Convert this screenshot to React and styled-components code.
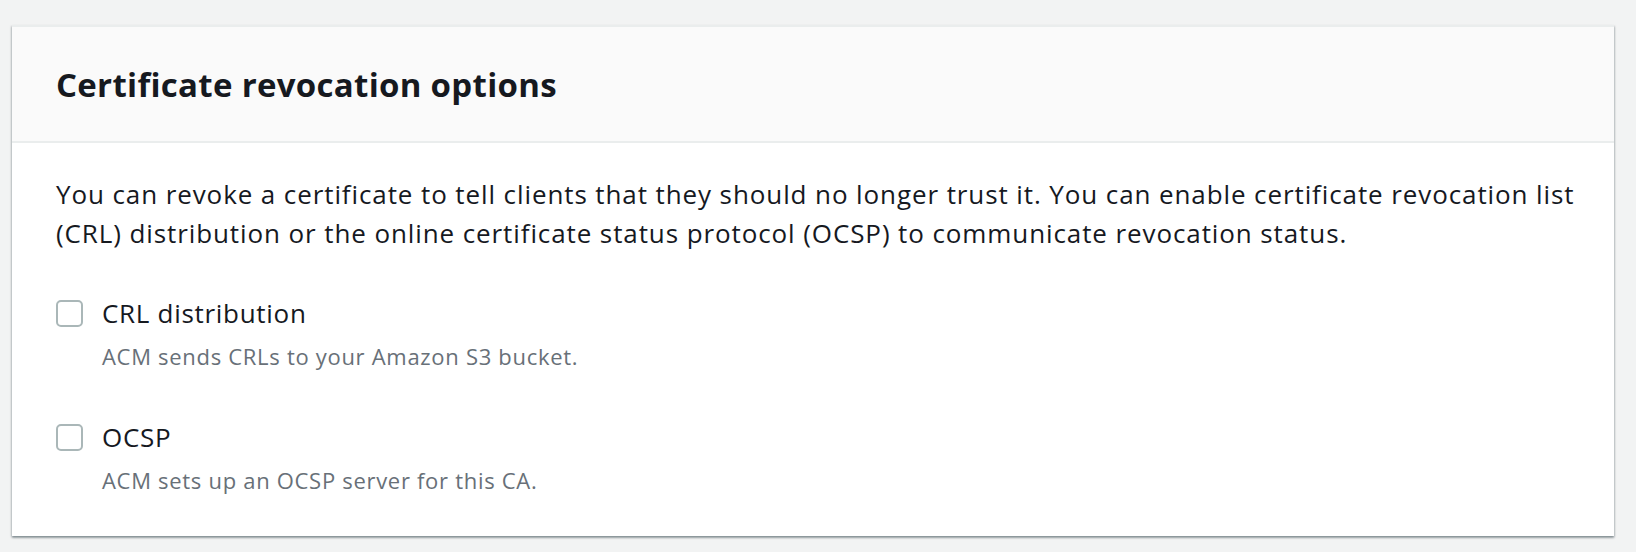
import React from "react";
import styled, { createGlobalStyle } from "styled-components";

const GlobalStyle = createGlobalStyle`
  html, body {
    margin: 0;
    padding: 0;
    background: #f2f3f3;
  }
  body {
    font-family: "Open Sans", "Noto Sans", sans-serif;
    color: #16191f;
  }
`;

const options = [
  {
    id: "crl",
    label: "CRL distribution",
    description: "ACM sends CRLs to your Amazon S3 bucket.",
  },
  {
    id: "ocsp",
    label: "OCSP",
    description: "ACM sets up an OCSP server for this CA.",
  },
];

function App() {
  return (
    <>
      <GlobalStyle />
      <Page>
        <Card>
          <Header>
            <Title>Certificate revocation options</Title>
          </Header>
          <Body>
            <Intro>
              You can revoke a certificate to tell clients that they should no
              longer trust it. You can enable certificate revocation list (CRL)
              distribution or the online certificate status protocol (OCSP) to
              communicate revocation status.
            </Intro>
            <OptionList>
              {options.map((opt) => (
                <Option key={opt.id}>
                  <Box />
                  <OptionText>
                    <Label>{opt.label}</Label>
                    <Description>{opt.description}</Description>
                  </OptionText>
                </Option>
              ))}
            </OptionList>
          </Body>
        </Card>
      </Page>
    </>
  );
}

export default App;

const Page = styled.div`
  padding: 25px 22px 14px 12px;
`;

const Card = styled.section`
  background: #ffffff;
  border-top: 2px solid #eaeded;
  box-shadow: 0 2px 2px 0 rgba(0, 28, 36, 0.3),
    1px 1px 2px 0 rgba(0, 28, 36, 0.15), -1px 1px 2px 0 rgba(0, 28, 36, 0.15);
`;

const Header = styled.header`
  background: #fafafa;
  border-bottom: 2px solid #eaeded;
  padding: 38px 44px 37px;
`;

const Title = styled.h2`
  margin: 0;
  font-size: 33px;
  line-height: 39px;
  font-weight: 700;
  letter-spacing: 0.3px;
  color: #16191f;
`;

const Body = styled.div`
  padding: 32px 20px 42px 44px;
`;

const Intro = styled.p`
  margin: 0;
  font-size: 26px;
  line-height: 39px;
  letter-spacing: 0.9px;
  color: #16191f;
`;

const OptionList = styled.div`
  display: flex;
  flex-direction: column;
  gap: 48px;
  margin-top: 41px;
`;

const Option = styled.div`
  display: flex;
  align-items: flex-start;
  gap: 19px;
`;

const Box = styled.span`
  flex: none;
  box-sizing: border-box;
  width: 27px;
  height: 27px;
  margin-top: 6px;
  border: 2px solid #aab7b8;
  border-radius: 5px;
  background: #ffffff;
`;

const OptionText = styled.div`
  display: flex;
  flex-direction: column;
  gap: 9px;
`;

const Label = styled.span`
  font-size: 26px;
  line-height: 39px;
  letter-spacing: 0.7px;
  color: #16191f;
`;

const Description = styled.span`
  font-size: 22px;
  line-height: 28px;
  letter-spacing: 0.7px;
  color: #687078;
`;
